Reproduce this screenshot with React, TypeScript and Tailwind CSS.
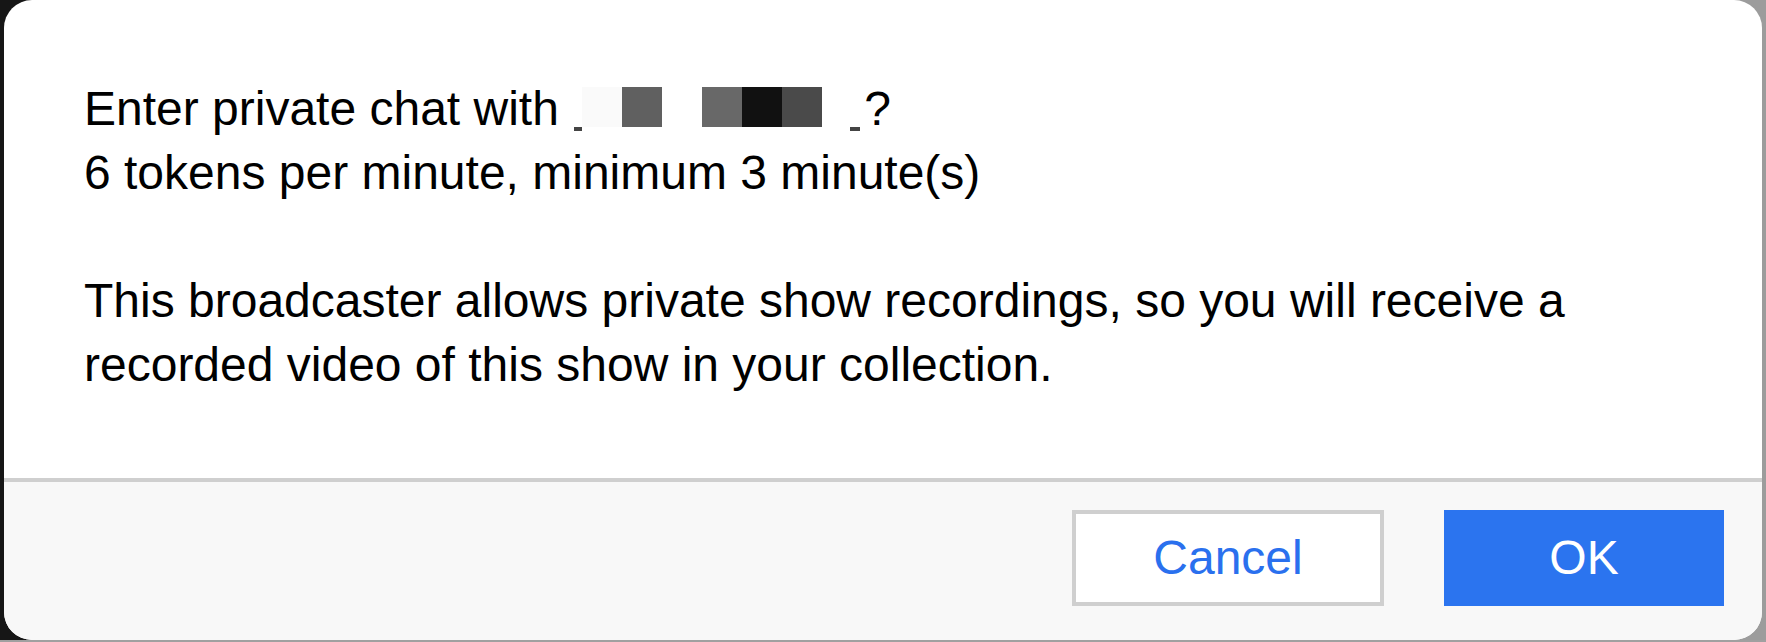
const nameBlocks = ['#fafafa', '#606060', '#ffffff', '#686868', '#111111', '#4a4a4a'];

const RedactedName = () => (
  <span className="inline-block whitespace-nowrap">
    <span className="inline-block w-[8px] h-[4px] bg-[#444] align-[-6px] ml-[2px]" />
    {nameBlocks.map((c, i) => (
      <span
        key={i}
        className="inline-block w-[40px] h-[40px] align-[-2px]"
        style={{ backgroundColor: c }}
      />
    ))}
    <span className="inline-block w-[28px]" />
    <span className="inline-block w-[10px] h-[4px] bg-[#444] align-[-6px] mr-[4px]" />
  </span>
);

const App = () => {
  return (
    <div className="w-[1766px] h-[642px] flex flex-col bg-[linear-gradient(to_right,#161616_50%,#9c9c9c_50%)] font-['Liberation_Sans',Arial,sans-serif]">
      <div className="flex-1 px-[4px]">
        <div className="h-[640px] bg-white rounded-[28px] overflow-hidden flex flex-col">
          <div className="h-[478px] pt-[77px] px-[80px] text-[48px] leading-[64px] text-black">
            <p className="whitespace-nowrap">
              Enter private chat with <RedactedName />?
              <br />
              6 tokens per minute, minimum 3 minute(s)
              <br />
              <br />
              This broadcaster allows private show recordings, so you will receive a
              <br />
              recorded video of this show in your collection.
            </p>
          </div>
          <div className="flex-1 bg-[#f8f8f8] border-t-[4px] border-[#cfcfcf] flex items-start justify-end gap-[60px] pt-[28px] pr-[38px]">
            <button className="w-[312px] h-[96px] bg-white border-[4px] border-[#cfcfcf] text-[48px] text-[#2a70ee] leading-none">
              Cancel
            </button>
            <button className="w-[280px] h-[96px] bg-[#2b74ef] text-[48px] text-white leading-none">
              OK
            </button>
          </div>
        </div>
      </div>
      <div className="h-[2px] bg-[#a0a0a0]" />
    </div>
  );
};

export default App;
